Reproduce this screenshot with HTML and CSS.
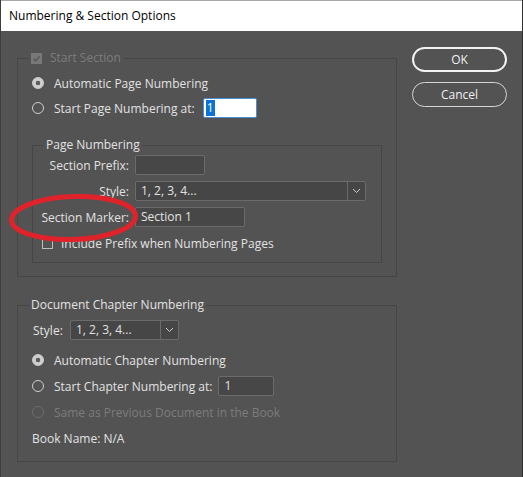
FILE: index.html
```html
<!DOCTYPE html>
<html lang="en">

<head>
    <meta charset="UTF-8">
    <title>Numbering &amp; Section Options</title>
    <link rel="stylesheet" href="styles.css">
</head>

<body>
    <div class="window">
        <div class="titlebar">Numbering &amp; Section Options</div>

        <div class="dialog">
            <div class="main">
                <!-- Start Section group -->
                <fieldset class="group">
                    <legend class="is-disabled">
                        <span class="check check-on">
                            <svg width="11" height="11" viewBox="0 0 11 11">
                                <path d="M2.5 5.8 L4.6 7.9 L8.6 3.2" fill="none" stroke="#5a5a5a" stroke-width="1.6" />
                            </svg>
                        </span>
                        Start Section
                    </legend>

                    <div class="stack">
                        <label class="row"><input type="radio" name="page-mode" checked> Automatic Page Numbering</label>
                        <label class="row"><input type="radio" name="page-mode"> Start Page Numbering at:
                            <span class="field field-focus"><span class="selected-text">1</span></span>
                        </label>
                    </div>

                    <fieldset class="group inner">
                        <legend>Page Numbering</legend>
                        <div class="form-grid">
                            <label class="grid-label">Section Prefix:</label>
                            <span class="field prefix-field"></span>

                            <label class="grid-label">Style:</label>
                            <div class="select style-wide">
                                <span class="select-value">1, 2, 3, 4...</span>
                                <span class="select-arrow">
                                    <svg width="9" height="6" viewBox="0 0 9 6">
                                        <path d="M1 1 L4.5 4.5 L8 1" fill="none" stroke="#cfcfcf" stroke-width="1" />
                                    </svg>
                                </span>
                            </div>

                            <label class="grid-label">Section Marker:</label>
                            <span class="field marker-field">Section 1</span>
                        </div>
                        <label class="row check-row"><span class="check"></span> Include Prefix when Numbering Pages</label>
                    </fieldset>
                </fieldset>

                <!-- Document Chapter Numbering group -->
                <fieldset class="group chapter">
                    <legend>Document Chapter Numbering</legend>

                    <div class="row style-row">
                        <label class="style-label">Style:</label>
                        <div class="select style-short">
                            <span class="select-value">1, 2, 3, 4...</span>
                            <span class="select-arrow">
                                <svg width="9" height="6" viewBox="0 0 9 6">
                                    <path d="M1 1 L4.5 4.5 L8 1" fill="none" stroke="#cfcfcf" stroke-width="1" />
                                </svg>
                            </span>
                        </div>
                    </div>

                    <div class="stack chapter-options">
                        <label class="row"><input type="radio" name="chapter-mode" checked> Automatic Chapter Numbering</label>
                        <label class="row"><input type="radio" name="chapter-mode"> Start Chapter Numbering at:
                            <span class="field chapter-field">1</span>
                        </label>
                        <label class="row is-disabled"><input type="radio" name="chapter-mode" disabled> Same as Previous Document in the Book</label>
                        <div class="row">Book Name: N/A</div>
                    </div>
                </fieldset>
            </div>

            <div class="buttons">
                <button type="button" class="btn btn-default">OK</button>
                <button type="button" class="btn">Cancel</button>
            </div>
        </div>

        <!-- red marker ring drawn over the Section Marker label -->
        <svg class="marker-ring" width="150" height="60" viewBox="0 0 150 60">
            <ellipse cx="72.5" cy="27" rx="62" ry="21.5" fill="none" stroke="#e0232a" stroke-width="5"
                transform="rotate(-2 72.5 27)" />
        </svg>
    </div>
</body>

</html>
```

FILE: styles.css
```css
* {
    box-sizing: border-box;
}

body {
    margin: 0;
    background-color: #535353;
    font-family: "Open Sans", "Noto Sans", sans-serif;
    font-size: 12px;
    color: #e2e2e2;
}

.window {
    position: relative;
    width: 523px;
    height: 477px;
    background-color: #535353;
    border-left: 1px solid #3e3e3e;
    border-right: 1px solid #2f2f2f;
}

.titlebar {
    height: 31px;
    background-color: #fff;
    border-top: 1px solid #a8a8a8;
    padding-left: 8px;
    line-height: 30px;
    color: #000;
}

.dialog {
    display: flex;
    align-items: flex-start;
    gap: 15px;
    padding-left: 16px;
}

.main {
    width: 380px;
    padding-top: 20px;
}

/* group boxes */
.group {
    margin: 0;
    min-width: 0;
    border: 1px solid #464646;
    padding: 8px 14px 13px 14px;
}

.group legend {
    margin-left: -3px;
    padding: 0 2px;
    line-height: 14px;
    display: flex;
    align-items: center;
    gap: 8px;
}

.group.inner {
    margin-top: 20px;
    padding: 3px 0 9px 4px;
}

.group.inner legend {
    margin-left: 6px;
    padding: 0 3px;
}

.group.chapter {
    margin-top: 21px;
}

.is-disabled {
    color: #7c7c7c;
}

.stack {
    display: flex;
    flex-direction: column;
    gap: 5px;
}

.row {
    display: flex;
    align-items: center;
    height: 20px;
    white-space: nowrap;
}

/* radio buttons */
.row input[type="radio"] {
    appearance: none;
    width: 12px;
    height: 12px;
    margin: 0 10px 0 0;
    border: 1px solid #cdcdcd;
    border-radius: 50%;
}

.row input[type="radio"]:checked {
    background: radial-gradient(circle, #5d5d5d 0 2px, #cfcfcf 2.6px);
}

.row input[type="radio"]:disabled {
    border-color: #6c6c6c;
}

/* check boxes */
.check {
    display: inline-block;
    width: 11px;
    height: 11px;
    border: 1px solid #bdbdbd;
}

.check-on {
    border: none;
    background-color: #787878;
}

.check-on svg {
    display: block;
}

.check-row {
    margin-top: 6px;
    padding-left: 5px;
    gap: 8px;
}

/* text fields */
.field {
    display: inline-block;
    height: 20px;
    line-height: 18px;
    padding: 0 5px;
    background-color: #474747;
    border: 1px solid #6b6b6b;
    border-radius: 2px;
}

.field-focus {
    width: 54px;
    margin-left: 8px;
    padding: 0 2px;
    background-color: #fff;
    border: 1px solid #4d8fd6;
    line-height: 16px;
    padding-top: 1px;
}

.selected-text {
    display: inline-block;
    padding: 0 1px;
    background-color: #0a74d6;
    color: #fff;
}

.prefix-field {
    width: 70px;
}

.marker-field {
    width: 110px;
}

.chapter-field {
    width: 56px;
    margin-left: 6px;
}

/* label / control grid */
.form-grid {
    display: grid;
    grid-template-columns: 92px 1fr;
    column-gap: 6px;
    row-gap: 6px;
    align-items: center;
}

.grid-label {
    text-align: right;
}

/* dropdowns */
.select {
    display: flex;
    height: 20px;
    background-color: #464646;
    border: 1px solid #6b6b6b;
    border-radius: 2px;
}

.select-value {
    flex: 1;
    padding-left: 5px;
    line-height: 18px;
}

.select-arrow {
    width: 18px;
    display: flex;
    align-items: center;
    justify-content: center;
    border-left: 1px solid #6b6b6b;
}

.style-wide {
    width: 231px;
}

.style-short {
    width: 109px;
}

.style-label {
    width: 38px;
    padding-left: 1px;
}

.chapter-options {
    margin-top: 10px;
    gap: 6px;
}

/* buttons */
.buttons {
    display: flex;
    flex-direction: column;
    gap: 10px;
    padding-top: 16px;
}

.btn {
    width: 95px;
    height: 25px;
    border: 1px solid #d6d6d6;
    border-radius: 13px;
    background-color: transparent;
    color: #f0f0f0;
    font-family: inherit;
    font-size: 12px;
    cursor: pointer;
}

.btn-default {
    border: 2px solid #f2f2f2;
}

.marker-ring {
    position: absolute;
    left: 0;
    top: 191px;
}
```
